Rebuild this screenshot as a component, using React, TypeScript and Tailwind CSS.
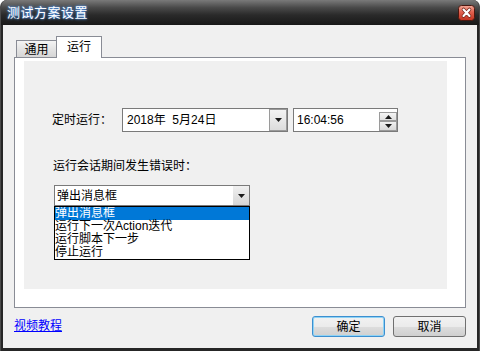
import React from "react";

const Down = () => (
  <svg width="7" height="4" viewBox="0 0 7 4"><path d="M0 0H7L3.5 4Z" fill="#1a1a1a" /></svg>
);
const Up = () => (
  <svg width="7" height="4" viewBox="0 0 7 4"><path d="M0 4H7L3.5 0Z" fill="#1a1a1a" /></svg>
);

export default function App() {
  return (
    <div className="w-[480px] h-[351px] bg-white font-['Liberation_Sans','Noto_Sans_CJK_SC',sans-serif] text-[12px] text-black">
      <div className="w-[480px] h-[351px] rounded-t-[7px] bg-[#262626] flex flex-col overflow-hidden border-l border-r border-[#4a4a4a]">
        {/* title bar */}
        <div className="h-[25px] shrink-0 flex items-center justify-between pl-[6px] pr-[4px] bg-[linear-gradient(to_bottom,#7a7a7a,#4a4a4a_30%,#2a2a2a_60%,#181818)]">
          <span className="text-[13px] leading-[13px] text-white tracking-[0.5px] [text-shadow:0_0_3px_#5aa0ff,0_0_2px_#3a7fd0]">测试方案设置</span>
          <svg width="17" height="16" viewBox="0 0 17 16" className="mt-[1px]">
            <defs>
              <linearGradient id="cb" x1="0" y1="0" x2="0" y2="1">
                <stop offset="0" stopColor="#f2a898" />
                <stop offset="0.45" stopColor="#e0604e" />
                <stop offset="1" stopColor="#c2321e" />
              </linearGradient>
            </defs>
            <rect x="0.5" y="0.5" width="16" height="15" rx="3" fill="url(#cb)" stroke="#4a1810" />
            <path d="M5.5 4.5 L11.5 11 M11.5 4.5 L5.5 11" stroke="#7a2a1e" strokeWidth="3.6" strokeLinecap="round" />
            <path d="M5.5 4.5 L11.5 11 M11.5 4.5 L5.5 11" stroke="#fff" strokeWidth="2.1" strokeLinecap="round" />
          </svg>
        </div>
        {/* client */}
        <div className="mx-[2px] h-[323px] shrink-0 bg-[#f0f0f0] pt-[11px] pl-[11px] pr-[11px] flex flex-col">
          {/* tabs */}
          <div className="h-[21px] flex items-end pl-[2px]">
            <div className="w-[41px] h-[17px] border border-b-0 border-[#898c95] bg-[linear-gradient(to_bottom,#f4f4f4,#e4e4e4_50%,#d6d6d6)] flex items-center justify-center leading-[14px] pt-[2px]">通用</div>
            <div className="relative z-10 -ml-[1px] -mb-[1px] w-[46px] h-[22px] border border-b-0 border-[#898c95] bg-white flex items-center justify-center leading-[14px] pb-[2px]">运行</div>
          </div>
          {/* panel */}
          <div className="h-[251px] w-[452px] border border-[#898c95] bg-white">
            <div className="ml-[9px] mt-[3px] w-[423px] h-[228px] bg-[#f0f0f0] flex flex-col">
              <div className="mt-[47px] h-[24px] flex items-center">
                <div className="pl-[28px] w-[98px] leading-[14px]">定时运行：</div>
                <div className="w-[166px] h-[24px] border border-[#7a7a7a] bg-white flex items-center">
                  <span className="pl-[4px] whitespace-pre leading-[14px] text-[#000]">2018年  5月24日</span>
                  <div className="ml-auto w-[18px] h-[22px] border border-[#9a9a9a] bg-[linear-gradient(to_bottom,#f3f3f3,#dcdcdc)] flex items-center justify-center">
                    <Down />
                  </div>
                </div>
                <div className="ml-[5px] w-[105px] h-[24px] border border-[#7a7a7a] bg-white flex items-center">
                  <span className="pl-[3px] leading-[14px]">16:04:56</span>
                  <div className="ml-auto mt-[3px] w-[18px] h-[19px] flex flex-col">
                    <div className="h-[9px] border border-[#9a9a9a] bg-[linear-gradient(to_bottom,#f5f5f5,#e0e0e0)] flex items-center justify-center"><Up /></div>
                    <div className="h-[10px] border border-[#9a9a9a] bg-[linear-gradient(to_bottom,#f0f0f0,#d8d8d8)] flex items-center justify-center"><Down /></div>
                  </div>
                </div>
              </div>
              <div className="mt-[27px] h-[14px] leading-[14px] pl-[29px]">运行会话期间发生错误时：</div>
              <div className="mt-[12px] ml-[30px] w-[196px] h-[21px] border border-[#7a7a7a] bg-white flex items-center">
                <span className="pl-[2px] leading-[14px]">弹出消息框</span>
                <div className="ml-auto w-[16px] h-[19px] bg-[linear-gradient(to_bottom,#f0f0f0,#d6d6d6)] flex items-center justify-center">
                  <Down />
                </div>
              </div>
              <div className="ml-[30px] w-[196px] h-[54px] border border-black bg-white overflow-hidden">
                <div className="h-[13px] leading-[13px] bg-[#0078d7] text-white">弹出消息框</div>
                <div className="h-[13px] leading-[13px]">运行下一次Action迭代</div>
                <div className="h-[13px] leading-[13px]">运行脚本下一步</div>
                <div className="h-[13px] leading-[13px]">停止运行</div>
              </div>
            </div>
          </div>
          {/* bottom */}
          <div className="mt-[8px] h-[21px] flex items-center">
            <a className="text-[#0000ff] underline leading-[14px] mt-[-1px]">视频教程</a>
            <div className="ml-auto flex gap-[8px]">
              <div className="w-[73px] h-[21px] rounded-[3px] border border-[#3c8fd0] shadow-[inset_0_0_0_1px_#8fd3f5] bg-[linear-gradient(to_bottom,#f2f2f2,#ebebeb_50%,#dddddd_51%,#d0d0d0)] flex items-center justify-center leading-[14px]">确定</div>
              <div className="w-[73px] h-[21px] rounded-[3px] border border-[#707070] bg-[linear-gradient(to_bottom,#f2f2f2,#ebebeb_50%,#dddddd_51%,#cfcfcf)] flex items-center justify-center leading-[14px]">取消</div>
            </div>
          </div>
        </div>
        <div className="flex-1 bg-[#262626]" />
      </div>
    </div>
  );
}
